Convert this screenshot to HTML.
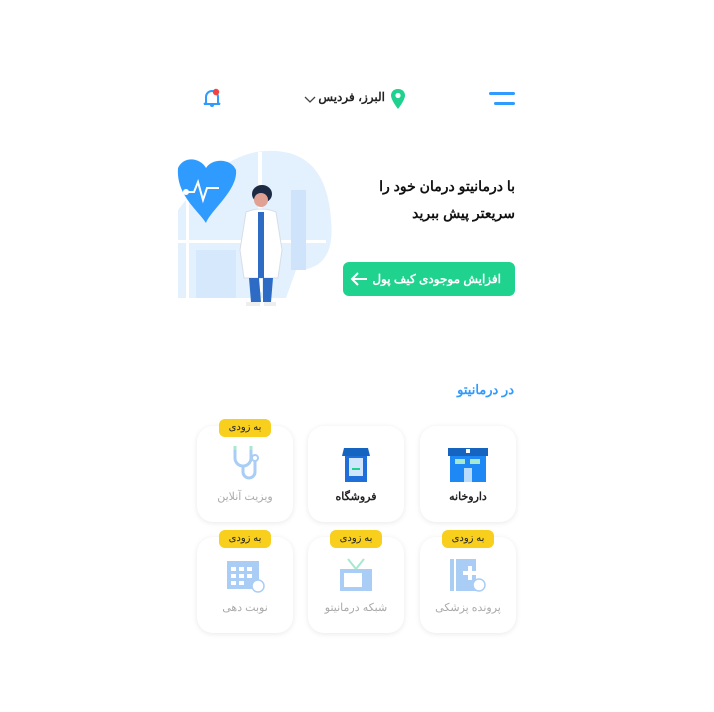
<!DOCTYPE html>
<html dir="rtl"><head><meta charset="utf-8"><style>
*{margin:0;padding:0;box-sizing:border-box}
body{width:714px;height:712px;background:#fff;font-family:"Liberation Sans","Noto Sans CJK SC",sans-serif;position:relative;overflow:hidden}
.a{position:absolute}
.card{position:absolute;width:96px;height:96px;border-radius:16px;background:#fff;box-shadow:0 1px 6px rgba(0,0,0,.09);text-align:center}
.card .t{position:absolute;left:0;right:0;top:64px;font-size:11px;color:#222;font-weight:bold}
.card .t.g{color:#aaa;font-weight:normal}
.badge{position:absolute;width:52px;height:18px;background:#f8cf1c;border-radius:6px;font-size:10px;line-height:18px;text-align:center;color:#222;top:-7px;left:22px}
.ic{position:absolute;left:28px;top:20px;width:40px;height:36px}
</style></head><body>
<div class="a" style="left:489px;top:92px;width:26px;height:3px;background:#2f9bff;border-radius:2px"></div>
<div class="a" style="left:494px;top:102px;width:21px;height:3px;background:#2f9bff;border-radius:2px"></div>
<svg class="a" style="left:389px;top:88px" width="18" height="22" viewBox="0 0 18 22"><path d="M9 1C4.5 1 2 4 2 7.5 2 12 9 21 9 21s7-9 7-13.5C16 4 13.5 1 9 1z" fill="#1fd18e"/><circle cx="9" cy="7.5" r="2.6" fill="#fff"/></svg>
<div class="a" style="right:329px;top:90px;font-size:12px;font-weight:bold;color:#222;white-space:nowrap">البرز، فردیس</div>
<svg class="a" style="left:304px;top:96px" width="12" height="8"><path d="M1 1l5 5 5-5" stroke="#444" stroke-width="1.3" fill="none"/></svg>
<svg class="a" style="left:202px;top:88px" width="20" height="20" viewBox="0 0 20 20"><path d="M4 15V9a6 6 0 0 1 12 0v6l2 1H2z" fill="none" stroke="#2f9bff" stroke-width="2"/><path d="M8 17a2 2 0 0 0 4 0" fill="#2f9bff"/><circle cx="14" cy="4" r="3.2" fill="#f2433f"/></svg>
<div class="a" style="right:199px;top:173px;font-size:14px;font-weight:bold;color:#111;line-height:27px;text-align:right">با درمانیتو درمان خود را<br>سریعتر پیش ببرید</div>
<div class="a" style="left:343px;top:262px;width:172px;height:34px;background:#1fd38f;border-radius:6px;color:#fff;font-size:12px;font-weight:bold;line-height:34px;padding-right:14px;white-space:nowrap">افزایش موجودی کیف پول</div>
<svg class="a" style="left:350px;top:272px" width="18" height="14"><path d="M17 7H2M8 1L2 7l6 6" stroke="#fff" stroke-width="2" fill="none"/></svg>
<svg class="a" style="left:176px;top:150px" width="160" height="162" viewBox="0 0 160 162">
<path d="M2 148V60Q40 10 80 2Q150 -8 155 70Q160 120 120 120L110 148Z" fill="#e3f0fd"/>
<rect x="10" y="20" width="3" height="128" fill="#fff"/><rect x="82" y="2" width="4" height="140" fill="#fff"/><rect x="0" y="90" width="150" height="3" fill="#fff"/>
<rect x="115" y="40" width="15" height="80" fill="#cfe4fb"/><rect x="20" y="100" width="40" height="48" fill="#d5e8fc"/>
<path d="M2 18C8 5 25 8 30 18C36 8 55 8 60 20C62 40 35 60 30 73C22 60 0 45 2 18z" fill="#2f9bff"/>
<path d="M10 42h8l4-10 5 18 4-12h12" stroke="#fff" stroke-width="2" fill="none"/><circle cx="10" cy="42" r="3" fill="#fff"/>
<ellipse cx="86" cy="44" rx="10" ry="9" fill="#1d2a44"/><circle cx="85" cy="50" r="7" fill="#e0a093"/>
<path d="M70 62Q85 56 100 62L106 100 102 128H68L64 100z" fill="#fff" stroke="#d8dde8"/>
<rect x="82" y="62" width="6" height="66" fill="#2d6bc5"/>
<path d="M73 128h10l2 24h-10zM87 128h10l-2 24h-8z" fill="#2d6bc5"/>
<rect x="70" y="152" width="14" height="4" fill="#eee"/><rect x="88" y="152" width="12" height="4" fill="#eee"/>
</svg>
<div class="a" style="right:200px;top:382px;font-size:13px;font-weight:bold;color:#2f9bff">در درمانیتو</div>
<div class="card" style="left:420px;top:426px">
<svg class="ic" viewBox="0 0 40 36"><rect x="2" y="8" width="36" height="28" fill="#1e88f5"/><rect x="0" y="2" width="40" height="8" fill="#1565c0"/><rect x="7" y="13" width="10" height="5" fill="#a6e9d0"/><rect x="22" y="13" width="10" height="5" fill="#a6e9d0"/><rect x="16" y="22" width="8" height="14" fill="#b9dcfd"/><rect x="18" y="3" width="4" height="4" fill="#fff"/></svg>
<div class="t">داروخانه</div></div>
<div class="card" style="left:308px;top:426px">
<svg class="ic" viewBox="0 0 40 36"><rect x="9" y="8" width="22" height="28" fill="#1e6fd9"/><path d="M8 2h24l2 8H6z" fill="#1565c0"/><rect x="13" y="12" width="14" height="18" fill="#cfe6fd"/><rect x="16" y="22" width="8" height="2" fill="#1fd18e"/></svg>
<div class="t">فروشگاه</div></div>
<div class="card" style="left:197px;top:426px"><div class="badge">به زودی</div>
<svg class="ic" viewBox="0 0 40 36"><path d="M10 2v10a8 8 0 0 0 16 0V2" stroke="#a9cdf5" stroke-width="3" fill="none"/><path d="M18 20v6a6 6 0 0 0 12 0V14" stroke="#a9cdf5" stroke-width="3" fill="none"/><circle cx="30" cy="12" r="3" stroke="#a9cdf5" stroke-width="2" fill="none"/><path d="M10 0v4M26 0v4" stroke="#a6e9d0" stroke-width="3"/></svg>
<div class="t g">ویزیت آنلاین</div></div>
<div class="card" style="left:420px;top:537px"><div class="badge">به زودی</div>
<svg class="ic" viewBox="0 0 40 36"><rect x="2" y="2" width="26" height="32" fill="#a9cdf5"/><rect x="6" y="2" width="2" height="32" fill="#fff"/><path d="M15 14h5v-5h4v5h5v4h-5v5h-4v-5h-5z" fill="#fff"/><circle cx="31" cy="28" r="6" fill="#fff" stroke="#a9cdf5" stroke-width="1.5"/></svg>
<div class="t g">پرونده پزشکی</div></div>
<div class="card" style="left:308px;top:537px"><div class="badge">به زودی</div>
<svg class="ic" viewBox="0 0 40 36"><path d="M12 2l8 10 8-10" stroke="#a6e9d0" stroke-width="2" fill="none"/><rect x="4" y="12" width="32" height="22" fill="#a9cdf5"/><rect x="8" y="16" width="18" height="14" fill="#fff"/></svg>
<div class="t g">شبکه درمانیتو</div></div>
<div class="card" style="left:197px;top:537px"><div class="badge">به زودی</div>
<svg class="ic" viewBox="0 0 40 36"><rect x="2" y="4" width="32" height="28" fill="#a9cdf5"/><g fill="#fff"><rect x="6" y="10" width="5" height="4"/><rect x="14" y="10" width="5" height="4"/><rect x="22" y="10" width="5" height="4"/><rect x="6" y="17" width="5" height="4"/><rect x="14" y="17" width="5" height="4"/><rect x="22" y="17" width="5" height="4"/><rect x="6" y="24" width="5" height="4"/><rect x="14" y="24" width="5" height="4"/></g><circle cx="33" cy="29" r="6" fill="#fff" stroke="#a9cdf5" stroke-width="1.5"/></svg>
<div class="t g">نوبت دهی</div></div>
</body></html>
